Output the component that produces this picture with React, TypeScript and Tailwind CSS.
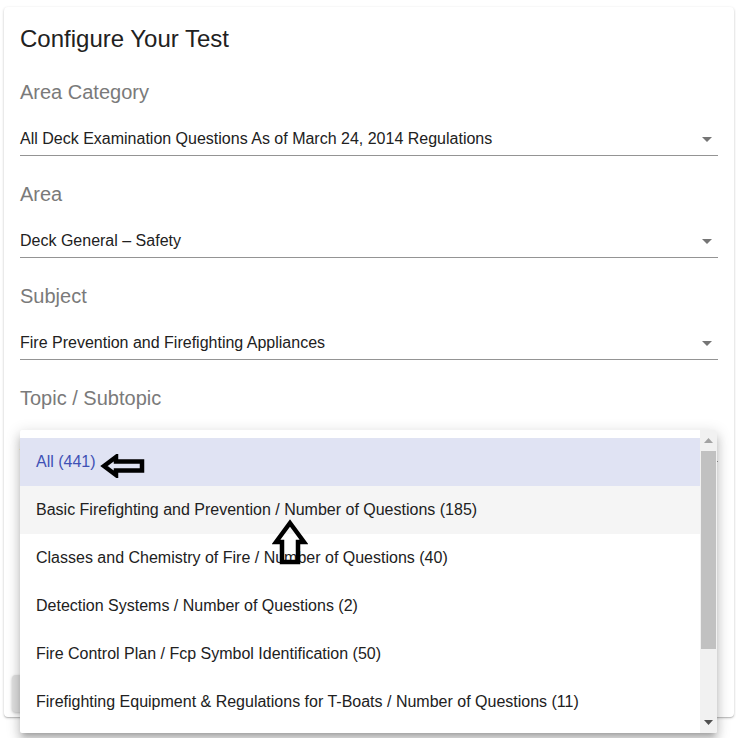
import React from 'react';

const fields = [
  { label: 'Area Category', value: 'All Deck Examination Questions As of March 24, 2014 Regulations' },
  { label: 'Area', value: 'Deck General – Safety' },
  { label: 'Subject', value: 'Fire Prevention and Firefighting Appliances' },
  { label: 'Topic / Subtopic', value: 'All (441)' },
];

const options = [
  'All (441)',
  'Basic Firefighting and Prevention / Number of Questions (185)',
  'Classes and Chemistry of Fire / Number of Questions (40)',
  'Detection Systems / Number of Questions (2)',
  'Fire Control Plan / Fcp Symbol Identification (50)',
  'Firefighting Equipment & Regulations for T-Boats / Number of Questions (11)',
];

function Caret() {
  return (
    <svg width="10" height="5" viewBox="0 0 10 5" className="shrink-0">
      <path d="M0 0 L10 0 L5 5 Z" fill="#757575" />
    </svg>
  );
}

function SelectField({ label, value }: { label: string; value: string }) {
  return (
    <div className="mb-[24px]">
      <div className="text-[20px] leading-[28px] text-[#7a7a7a]">{label}</div>
      <div className="mt-[17px] flex h-[33px] items-center justify-between border-b border-[#949494] pr-[6px]">
        <span className="text-[16px] text-[#212121]">{value}</span>
        <Caret />
      </div>
    </div>
  );
}

export default function App() {
  return (
    <div
      className="relative h-[738px] w-[736px] overflow-hidden bg-white"
      style={{ fontFamily: '"Liberation Sans", Arial, sans-serif' }}
    >
      {/* Card */}
      <div className="absolute left-[4px] top-[7px] h-[710px] w-[730px] rounded-[4px] bg-white shadow-[0_1px_3px_rgba(0,0,0,0.2),0_1px_1px_rgba(0,0,0,0.14)]">
        <div className="px-[16px] pt-[16px]">
          <h1 className="mb-[23px] text-[24px] leading-[32px] text-[#212121]">Configure Your Test</h1>
          {fields.map((f) => (
            <SelectField key={f.label} label={f.label} value={f.value} />
          ))}
        </div>
        <div className="absolute bottom-[5px] left-[8px]">
          <div className="h-[37px] w-[120px] rounded-[4px] bg-[#e0e0e0] shadow-[0_1px_3px_rgba(0,0,0,0.25)]" />
        </div>
      </div>

      {/* Open dropdown menu */}
      <div className="absolute left-[20px] top-[430px] flex h-[303px] w-[697px] overflow-hidden rounded-[2px] bg-white shadow-[0_5px_5px_-3px_rgba(0,0,0,0.2),0_8px_10px_1px_rgba(0,0,0,0.14),0_3px_14px_2px_rgba(0,0,0,0.12)]">
        <div className="flex-1 overflow-hidden pt-[8px]">
          {options.map((o, i) => (
            <div
              key={o}
              className={
                i === 0
                  ? 'flex h-[48px] items-center bg-[#e0e3f3] px-[16px] text-[16px] text-[#3f51b5]'
                  : i === 1
                  ? 'flex h-[48px] items-center bg-[#f5f5f5] px-[16px] text-[16px] text-[#212121]'
                  : 'flex h-[48px] items-center px-[16px] text-[16px] text-[#212121]'
              }
            >
              {o}
            </div>
          ))}
        </div>
        {/* scrollbar */}
        <div className="flex w-[17px] flex-col items-center bg-[#f1f1f1]">
          <div className="flex h-[21px] items-center justify-center">
            <svg width="9" height="5" viewBox="0 0 9 5">
              <path d="M0 5 L9 5 L4.5 0 Z" fill="#a3a3a3" />
            </svg>
          </div>
          <div className="h-[198px] w-[15px] bg-[#c1c1c1]" />
          <div className="flex-1" />
          <div className="flex h-[21px] items-center justify-center">
            <svg width="9" height="5" viewBox="0 0 9 5">
              <path d="M0 0 L9 0 L4.5 5 Z" fill="#505050" />
            </svg>
          </div>
        </div>
      </div>

      {/* annotation arrows */}
      <svg className="absolute left-[100px] top-[454px]" width="46" height="24" viewBox="0 0 46 24">
        <path d="M4 12 L16 3 L16 7.5 L42 7.5 L42 16.5 L16 16.5 L16 21 Z" fill="none" stroke="#000" strokeWidth="4.5" strokeLinejoin="miter" />
      </svg>
      <svg className="absolute left-[272px] top-[519px]" width="36" height="47" viewBox="0 0 36 47">
        <path d="M18 4 L32 23 L26 23 L26 43 L10 43 L10 23 L4 23 Z" fill="none" stroke="#000" strokeWidth="4.5" strokeLinejoin="miter" />
      </svg>
    </div>
  );
}
